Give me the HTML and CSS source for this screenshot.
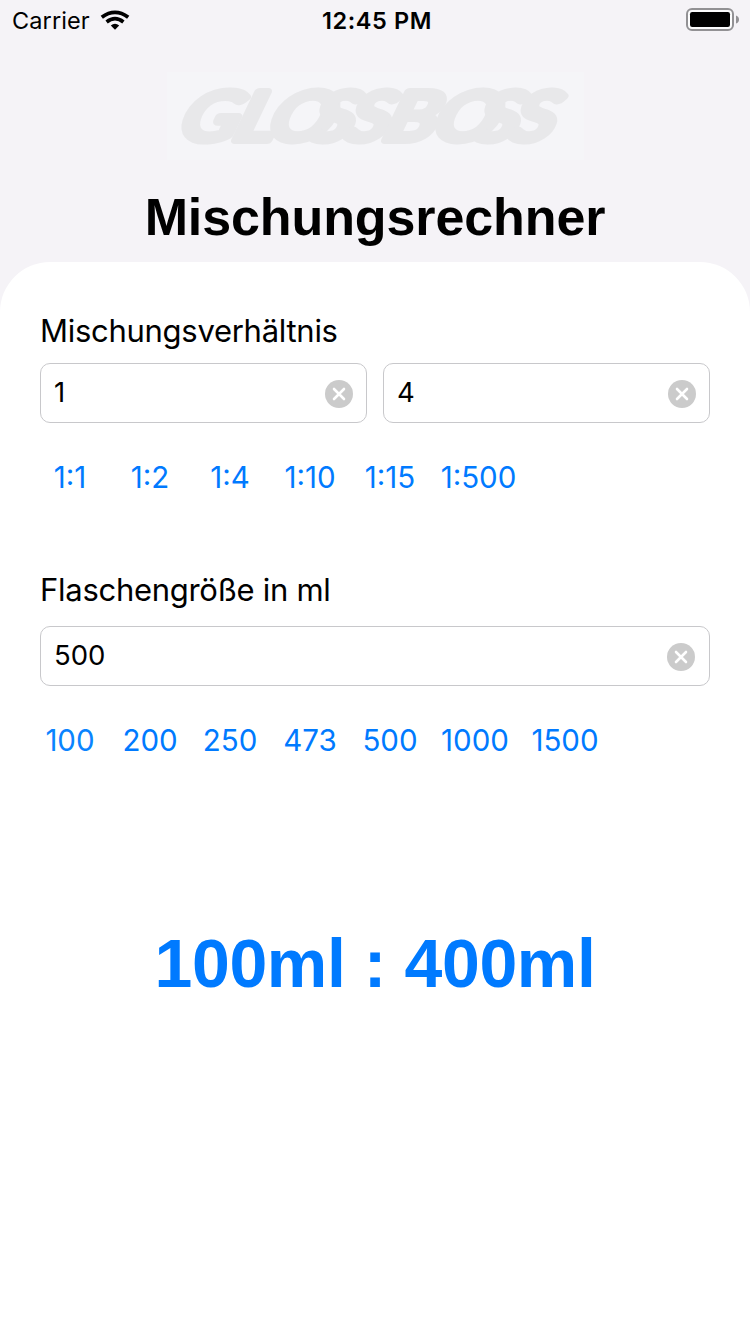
FILE: index.html
```html
<!DOCTYPE html>
<html lang="de">
<head>
<meta charset="utf-8">
<title>Mischungsrechner</title>
<link rel="stylesheet" href="styles.css">
</head>
<body>
<div class="status">
  <div class="status-left">
    <span class="carrier">Carrier</span>
    <svg class="wifi" width="30" height="22" viewBox="0 0 30 22"><path d="M1.800 6.300Q15-3.500 28.200 6.300" transform="translate(0 2)" fill="none" stroke="#000" stroke-width="3.800"/><path d="M6.600 13Q15 6.400 23.400 13" fill="none" stroke="#000" stroke-width="3.700"/><path d="M10.800 16.400Q15 12.900 19.200 16.400L15 20.800Z"/></svg>
  </div>
  <span class="time">12:45 PM</span>
  <svg class="battery" width="54" height="24" viewBox="0 0 54 24"><rect x="1" y="1" width="46" height="21" rx="5" fill="#fcfcfd" stroke="#929194" stroke-width="2"/><rect x="4" y="4" width="40" height="15" rx="2.2"/><path d="M50 7.500Q53 8.500 53 11.500T50 15.500Z" fill="#929194"/></svg>
</div>
<header class="head">
  <svg class="logo" width="417" height="88" viewBox="0 0 417 88">
    <g transform="translate(0 68) skewX(-18) scale(1.25 1)">
      <text class="logo-text" y="0" x="8 52 79 112 141 172 211 244 273">GLOSSBOSS</text>
    </g>
  </svg>
  <h1 class="title">Mischungsrechner</h1>
</header>
<main class="sheet">
  <div class="label">Mischungsverhältnis</div>
  <div class="fields">
    <div class="field"><span class="value">1</span><svg class="clear" width="28" height="28" viewBox="0 0 28 28"><circle cx="14" cy="14" r="14"/><path d="M9 9L19 19M19 9L9 19"/></svg></div>
    <div class="field"><span class="value">4</span><svg class="clear" width="28" height="28" viewBox="0 0 28 28"><circle cx="14" cy="14" r="14"/><path d="M9 9L19 19M19 9L9 19"/></svg></div>
  </div>
  <div class="chips"><a class="chip">1:1</a><a class="chip">1:2</a><a class="chip">1:4</a><a class="chip">1:10</a><a class="chip">1:15</a><a class="chip ratio-wide">1:500</a></div>
  <div class="label size-label">Flaschengröße in ml</div>
  <div class="fields size-fields">
    <div class="field size-field"><span class="value">500</span><svg class="clear" width="28" height="28" viewBox="0 0 28 28"><circle cx="14" cy="14" r="14"/><path d="M9 9L19 19M19 9L9 19"/></svg></div>
  </div>
  <div class="chips"><a class="chip first-size">100</a><a class="chip">200</a><a class="chip">250</a><a class="chip">473</a><a class="chip">500</a><a class="chip size-wide">1000</a><a class="chip size-wide">1500</a></div>
  <div class="result">100ml : 400ml</div>
</main>
</body>
</html>
```
FILE: styles.css
```css
* { box-sizing: border-box; }
body { margin: 0; width: 750px; height: 1334px; overflow: hidden; display: flex; flex-direction: column; background: #f5f3f7; color: #000; font-family: Inter, "Liberation Sans", sans-serif; }
.status { height: 40px; display: grid; grid-template-columns: 1fr auto 1fr; align-items: center; padding: 0 10px 0 12px; }
.status-left { display: flex; align-items: center; gap: 10px; }
.carrier { font-size: 23.5px; line-height: 42px; letter-spacing: .1px; }
.wifi { display: block; margin-bottom: 2px; }
.time { font-size: 23.5px; font-weight: 600; line-height: 42px; letter-spacing: .6px; padding-left: 2px; }
.battery { justify-self: end; display: block; margin-bottom: 2px; }
.head { height: 222px; flex: none; display: flex; flex-direction: column; align-items: center; padding-top: 32px; }
.logo { display: block; overflow: visible; background: #f5f5f8; }
.logo-text { font-family: Lato, sans-serif; font-weight: 400; font-style: italic; font-size: 67px; fill: #e8e8ea; stroke: #e8e8ea; stroke-width: 8px; stroke-linejoin: round; }
.title { margin: 27px 0 0; font-family: "Liberation Sans", sans-serif; font-size: 52px; line-height: 60px; font-weight: 700; letter-spacing: -.1px; white-space: nowrap; }
.sheet { flex: 1; background: #fff; border-radius: 50px 50px 0 0; padding: 49px 40px 0; }
.label { height: 40px; line-height: 40px; font-size: 31px; letter-spacing: -.28px; white-space: nowrap; }
.fields { display: flex; gap: 16px; margin-top: 12px; }
.field { flex: 1; height: 60px; border: 1px solid #c8c8cb; border-radius: 10px; padding: 0 13px; display: flex; align-items: center; justify-content: space-between; }
.value { font-size: 27.5px; line-height: 56px; margin-bottom: 2px; }
.clear { display: block; margin-top: 2px; }
.clear circle { fill: #cbcbcb; }
.clear path { stroke: #fff; stroke-width: 2.6; stroke-linecap: round; }
.chips { display: flex; gap: 20px; margin-top: 35px; height: 40px; line-height: 38px; color: #007aff; font-size: 29.5px; }
.chip { width: 60px; display: flex; justify-content: center; white-space: nowrap; }
.ratio-wide { width: 77px; }
.size-wide { width: 70px; }
.first-size { color: #0a84ff; }
.size-label { margin-top: 72px; }
.size-fields { margin-top: 16px; }
.size-field { padding-right: 14px; }
.result { margin-top: 162px; font-family: "Liberation Sans", sans-serif; font-weight: 700; font-size: 68px; line-height: 80px; letter-spacing: -.4px; color: #007aff; text-align: center; white-space: nowrap; }
```
